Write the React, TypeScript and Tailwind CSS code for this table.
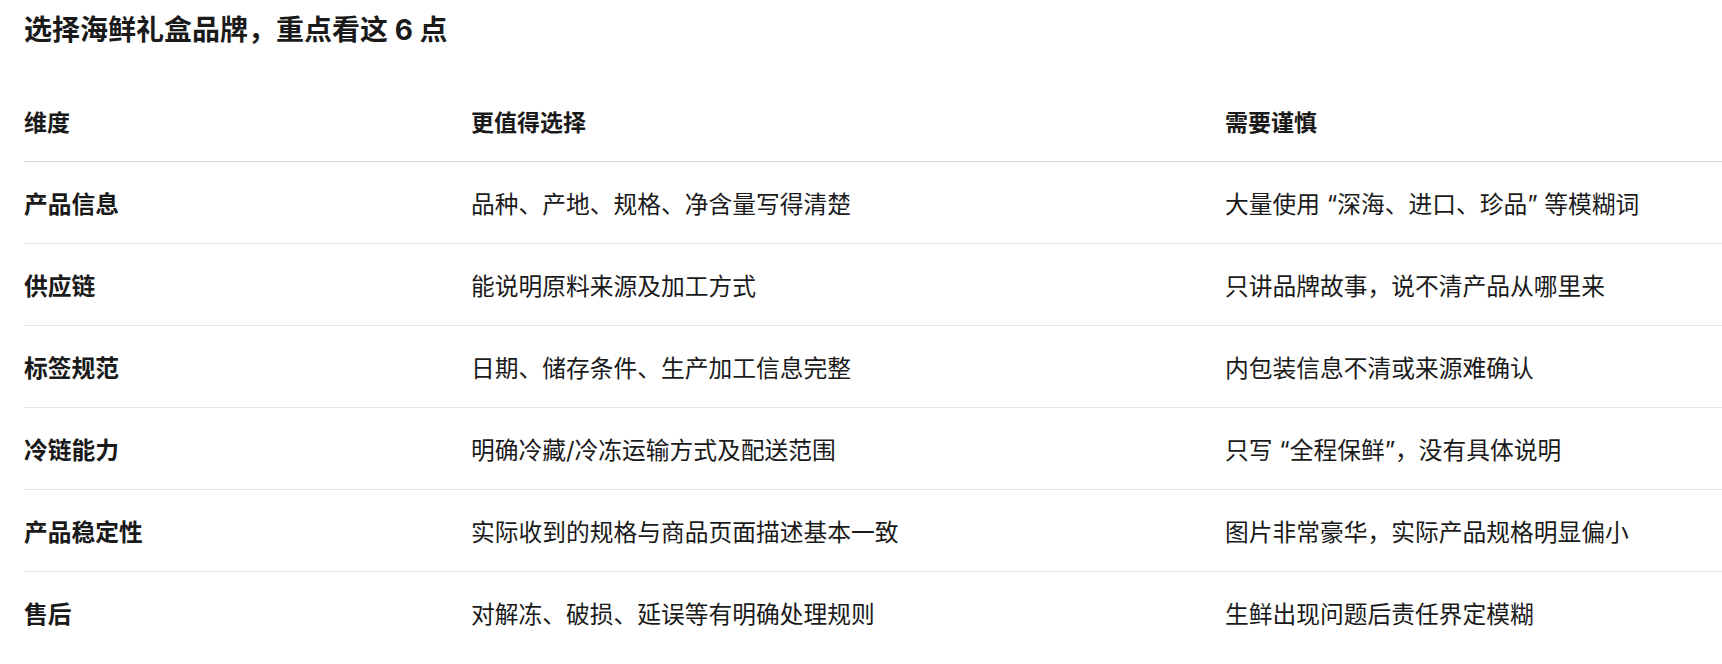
const rows = [
  ['产品信息', '品种、产地、规格、净含量写得清楚', '大量使用 “深海、进口、珍品” 等模糊词'],
  ['供应链', '能说明原料来源及加工方式', '只讲品牌故事，说不清产品从哪里来'],
  ['标签规范', '日期、储存条件、生产加工信息完整', '内包装信息不清或来源难确认'],
  ['冷链能力', '明确冷藏/冷冻运输方式及配送范围', '只写 “全程保鲜”，没有具体说明'],
  ['产品稳定性', '实际收到的规格与商品页面描述基本一致', '图片非常豪华，实际产品规格明显偏小'],
  ['售后', '对解冻、破损、延误等有明确处理规则', '生鲜出现问题后责任界定模糊'],
];

export default function App() {
  return (
    <div className="min-h-screen bg-white text-[#1a1a1a] font-['Inter','Noto_Sans_CJK_SC',sans-serif] overflow-hidden">
      <div className="pl-6 pt-[10px]">
        <h1 className="text-[28px] leading-[40px] font-bold">选择海鲜礼盒品牌，重点看这 6 点</h1>

        {/* comparison table */}
        <div className="mt-[35px] w-[1698px]">
          <div className="grid grid-cols-[447px_754px_1fr] items-center h-[77px] border-b border-[#d4d4d4] text-[23px] font-bold">
            <div>维度</div>
            <div>更值得选择</div>
            <div>需要谨慎</div>
          </div>
          {rows.map((row, i) => (
            <div
              key={row[0]}
              className={
                i === rows.length - 1
                  ? 'grid grid-cols-[447px_754px_1fr] items-center h-[82px] pt-[4px] pb-px text-[23.75px]'
                  : 'grid grid-cols-[447px_754px_1fr] items-center h-[82px] pt-[4px] border-b border-[#e6e6e6] text-[23.75px]'
              }
            >
              <div className="font-bold">{row[0]}</div>
              <div>{row[1]}</div>
              <div>{row[2]}</div>
            </div>
          ))}
        </div>
      </div>
    </div>
  );
}
